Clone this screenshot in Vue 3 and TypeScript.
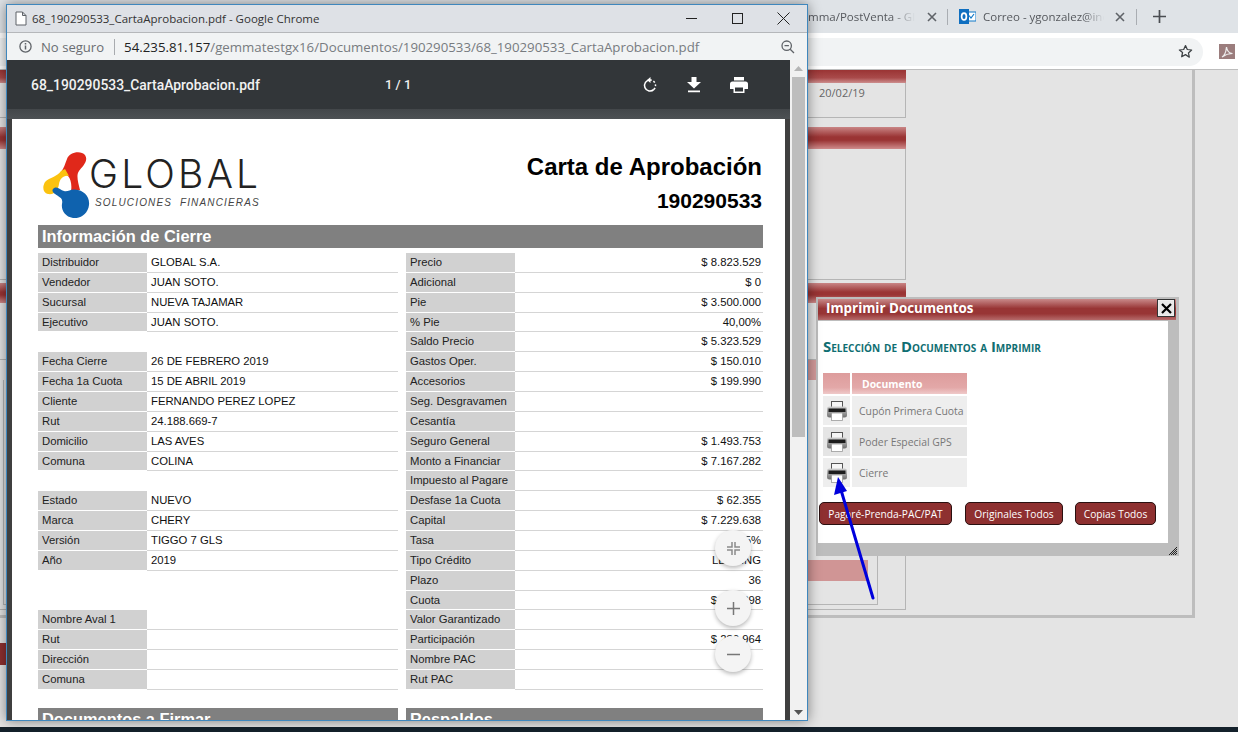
<script setup lang="ts">
type Row = [string, string] | null

const leftRows: Row[] = [
  ['Distribuidor', 'GLOBAL S.A.'],
  ['Vendedor', 'JUAN SOTO.'],
  ['Sucursal', 'NUEVA TAJAMAR'],
  ['Ejecutivo', 'JUAN SOTO.'],
  null,
  ['Fecha Cierre', '26 DE FEBRERO 2019'],
  ['Fecha 1a Cuota', '15 DE ABRIL 2019'],
  ['Cliente', 'FERNANDO PEREZ LOPEZ'],
  ['Rut', '24.188.669-7'],
  ['Domicilio', 'LAS AVES'],
  ['Comuna', 'COLINA'],
  null,
  ['Estado', 'NUEVO'],
  ['Marca', 'CHERY'],
  ['Versión', 'TIGGO 7 GLS'],
  ['Año', '2019'],
  null,
  null,
  ['Nombre Aval 1', ''],
  ['Rut', ''],
  ['Dirección', ''],
  ['Comuna', ''],
]

const rightRows: Row[] = [
  ['Precio', '$ 8.823.529'],
  ['Adicional', '$ 0'],
  ['Pie', '$ 3.500.000'],
  ['% Pie', '40,00%'],
  ['Saldo Precio', '$ 5.323.529'],
  ['Gastos Oper.', '$ 150.010'],
  ['Accesorios', '$ 199.990'],
  ['Seg. Desgravamen', ''],
  ['Cesantía', ''],
  ['Seguro General', '$ 1.493.753'],
  ['Monto a Financiar', '$ 7.167.282'],
  ['Impuesto al Pagare', ''],
  ['Desfase 1a Cuota', '$ 62.355'],
  ['Capital', '$ 7.229.638'],
  ['Tasa', '1,55%'],
  ['Tipo Crédito', 'LEASING'],
  ['Plazo', '36'],
  ['Cuota', '$ 230.398'],
  ['Valor Garantizado', ''],
  ['Participación', '$ 286.964'],
  ['Nombre PAC', ''],
  ['Rut PAC', ''],
]

const docs = ['Cupón Primera Cuota', 'Poder Especial GPS', 'Cierre']
</script>

<template>
  <div class="screen">
    <!-- browser behind -->
    <div class="tabs">
      <div class="tab tab--one">
        <span class="tab__text">mma/PostVenta - Global</span>
        <svg class="tab__x" width="10" height="10" viewBox="0 0 10 10"><path d="M1 1l8 8M9 1l-8 8" stroke="#5f6368" stroke-width="1.6" /></svg>
      </div>
      <div class="tab tab--two">
        <svg width="17" height="17" viewBox="0 0 17 17">
          <rect x="8" y="4" width="9" height="9" fill="#fff" stroke="#0f78c8" />
          <path d="M10 7.500l2 2.500 3-4" fill="none" stroke="#0f78c8" stroke-width="1.2" />
          <rect x="0" y="1" width="10" height="15" fill="#0f6fc0" />
          <ellipse cx="5" cy="8.500" rx="2.400" ry="3.400" fill="none" stroke="#fff" stroke-width="1.700" />
        </svg>
        <span class="tab__text tab__text--mail">Correo - ygonzalez@inc</span>
        <svg class="tab__x" width="10" height="10" viewBox="0 0 10 10"><path d="M1 1l8 8M9 1l-8 8" stroke="#5f6368" stroke-width="1.6" /></svg>
      </div>
      <svg class="tabs__plus" width="13" height="13" viewBox="0 0 13 13"><path d="M6.500 0v13M0 6.500h13" stroke="#4a4d52" stroke-width="1.7" /></svg>
    </div>
    <div class="toolbar">
      <div class="omnibox">
        <svg width="15" height="15" viewBox="0 0 24 24"><path d="M12 2.500l2.900 6.300 6.900.8-5.100 4.700 1.400 6.800L12 17l-6.100 3.400 1.400-6.800L2.200 9.600l6.900-.8z" fill="none" stroke="#3c4043" stroke-width="2" stroke-linejoin="round" /></svg>
      </div>
      <div class="pdf-ext">
        <svg width="14" height="14" viewBox="0 0 14 14"><path d="M2 12c2-1 4-5 4.500-10 .5 4 2 6 6 6.500-3.500 0-7 1-10.500 3.500z" fill="none" stroke="#eee" stroke-width="1.200" /></svg>
      </div>
    </div>
    <div class="page">
      <div class="outer">
        <div class="col">
          <div class="bar bar--thin" />
          <div class="cell">20/02/19</div>
          <div class="bar bar--two" />
          <div class="panel panel--a" />
          <div class="bar bar--three" />
          <div class="panel panel--b" />
          <div class="bar bar--pink" />
          <div class="panel panel--c">
            <div class="inner">
              <div class="bar-soft" />
            </div>
          </div>
        </div>
      </div>
      <div class="bar-dark" />
    </div>
    <div class="taskbar" />

    <!-- print dialog -->
    <div class="dialog">
      <div class="dialog__head">
        <span class="dialog__name">Imprimir Documentos</span>
        <div class="dialog__close">
          <svg width="11" height="11" viewBox="0 0 11 11"><path d="M1 1l9 9M10 1l-9 9" stroke="#000" stroke-width="2.200" /></svg>
        </div>
      </div>
      <div class="dialog__body">
        <h2 class="dialog__title">Selección de Documentos a Imprimir</h2>
        <div class="doc-grid">
          <div class="doc-h" />
          <div class="doc-h doc-h--name">Documento</div>
          <template v-for="(d, i) in docs" :key="d">
            <div class="doc-ic" :class="{ 'doc-alt': i === 1 }">
              <svg width="20" height="20" viewBox="0 0 20 20">
                <defs>
                  <linearGradient :id="'pg' + i" x1="0" y1="0" x2="0" y2="1">
                    <stop offset="0" stop-color="#cfcfcf" />
                    <stop offset="1" stop-color="#707070" />
                  </linearGradient>
                </defs>
                <rect x="4.500" y="0.500" width="11" height="6" fill="#f6f6f6" stroke="#555" />
                <rect x="0" y="5.500" width="20" height="11" rx="2.500" :fill="'url(#pg' + i + ')'" />
                <rect x="1.500" y="7.500" width="17" height="3.500" fill="#1c1c1c" />
                <rect x="4.500" y="12" width="11" height="7.500" fill="#fff" stroke="#999" stroke-width="0.800" />
              </svg>
            </div>
            <div class="doc-n" :class="{ 'doc-alt': i === 1 }">{{ d }}</div>
          </template>
        </div>
        <div class="dialog__btns">
          <button class="btn btn--a">Pagaré-Prenda-PAC/PAT</button>
          <button class="btn btn--b">Originales Todos</button>
          <button class="btn btn--c">Copias Todos</button>
        </div>
      </div>
      <svg class="dialog__grip" width="10" height="10" viewBox="0 0 10 10">
        <path d="M9 1L1 9M9 3L3 9M9 5L5 9M9 7L7 9" stroke="#222" stroke-width="1" />
      </svg>
    </div>

    <!-- hand drawn arrow -->
    <svg class="arrow" width="60" height="140" viewBox="0 0 60 140">
      <path d="M38 124L6 16" stroke="#0000dc" stroke-width="3" stroke-linecap="round" />
      <path d="M3 3L12 17L-1 21Z" fill="#0000dc" />
    </svg>

    <!-- pdf popup -->
    <div class="win">
      <div class="win__title">
        <svg width="12" height="15" viewBox="0 0 12 15"><path d="M1 1h6.500L11 4.500V14H1zM7.500 1v3.500H11" fill="#fff" stroke="#5f6368" /></svg>
        <span class="win__name">68_190290533_CartaAprobacion.pdf - Google Chrome</span>
        <svg class="win__btn" width="11" height="11" viewBox="0 0 11 11"><path d="M0 5.500h11" stroke="#222" /></svg>
        <svg class="win__btn" width="11" height="11" viewBox="0 0 11 11"><rect x="0.500" y="0.500" width="10" height="10" fill="none" stroke="#222" /></svg>
        <svg class="win__btn win__btn--x" width="13" height="13" viewBox="0 0 13 13"><path d="M0.500 0.500l12 12M12.500 0.500l-12 12" stroke="#222" /></svg>
      </div>
      <div class="win__addr">
        <svg width="13" height="13" viewBox="0 0 13 13">
          <circle cx="6.500" cy="6.500" r="5.600" fill="none" stroke="#5f6368" stroke-width="1.300" />
          <path d="M6.500 5.600v4M6.500 3v1.400" stroke="#5f6368" stroke-width="1.500" />
        </svg>
        <span class="win__sec">No seguro</span>
        <span class="win__sep" />
        <span class="win__url"><b>54.235.81.157</b>/gemmatestgx16/Documentos/190290533/68_190290533_CartaAprobacion.pdf</span>
        <svg class="win__zoom" width="14" height="14" viewBox="0 0 14 14">
          <circle cx="5.700" cy="5.700" r="4.700" fill="none" stroke="#5f6368" stroke-width="1.300" />
          <path d="M3.500 5.700h4.400M9.200 9.200L13 13" stroke="#5f6368" stroke-width="1.300" />
        </svg>
      </div>
      <div class="viewer">
        <div class="viewer__main">
          <div class="pdfbar">
            <span class="pdfbar__name">68_190290533_CartaAprobacion.pdf</span>
            <span class="pdfbar__count">1 / 1</span>
            <div class="pdfbar__icons">
              <svg width="16" height="17" viewBox="0 0 16 17">
                <path d="M8.500 1L5 4l3.500 3z" fill="#fff" />
                <path d="M8 4a5.500 5.500 0 1 0 3.900 9.400" fill="none" stroke="#fff" stroke-width="1.500" />
                <path d="M8 4a5.500 5.500 0 0 1 5.500 5.500 5.500 5.500 0 0 1-1.600 3.900" fill="none" stroke="#fff" stroke-width="1.500" stroke-dasharray="1.800 1.800" />
              </svg>
              <svg width="14" height="16" viewBox="0 0 14 16"><path d="M4.500 0h5v5.500H14L7 12 0 5.500h4.500zM1 14h12v1.700H1z" fill="#fff" transform="translate(0 -.5)" /></svg>
              <svg width="18" height="16" viewBox="0 0 18 16"><path d="M4 0h10v3.500H4zM2.500 4.500h13A2.500 2.500 0 0 1 18 7v5h-3.500v4h-11v-4H0V7a2.500 2.500 0 0 1 2.500-2.500zM5 10.500v4h8v-4z" fill="#fff" fill-rule="evenodd" /></svg>
            </div>
          </div>
          <div class="pdfshade" />
          <div class="sheet">
            <div class="sheet__head">
              <div class="logo">
                <svg class="logo__mark" width="48" height="66" viewBox="43 152 48 66">
                  <path d="M67 159C69 152 81 150 85 155C89 161 82 167 79 171C76 175 78 182 80 190L71 191C72 186 71 179 68 176L61 172C64 168 65 164 67 159Z" fill="#e0281a" />
                  <path d="M65 169L69 176C63 175 60 179 59 184C58 191 54 195 48 194C43 193 42 187 45 182C50 177 57 177 61 171Z" fill="#fbc20f" />
                  <path d="M53 189C57 185 60 190 64 191C68 192 70 189 75 189.500C84 190 90 197 89 205C88 214 80 219 73 218C65 217 61 210 62 204C63 199 61 198 58 196C55 194 51 192 53 189Z" fill="#0f62ae" />
                </svg>
                <div class="logo__text">
                  <span class="logo__name">GLOBAL</span>
                  <span class="logo__sub">SOLUCIONES&nbsp; FINANCIERAS</span>
                </div>
              </div>
              <div class="sheet__titles">
                <div class="sheet__h1">Carta de Aprobación</div>
                <div class="sheet__h2">190290533</div>
              </div>
            </div>
            <div class="section">Información de Cierre</div>
            <div class="cols">
              <div class="rows">
                <template v-for="(r, i) in leftRows" :key="i">
                  <div v-if="r" class="row">
                    <span class="row__k">{{ r[0] }}</span>
                    <span class="row__v">{{ r[1] }}</span>
                  </div>
                  <div v-else class="row row--blank" />
                </template>
              </div>
              <div class="rows">
                <template v-for="(r, i) in rightRows" :key="i">
                  <div v-if="r" class="row">
                    <span class="row__k">{{ r[0] }}</span>
                    <span class="row__v row__v--num">{{ r[1] }}</span>
                  </div>
                </template>
              </div>
            </div>
            <div class="cols cols--next">
              <div class="section">Documentos a Firmar</div>
              <div class="section">Respaldos</div>
            </div>
          </div>
          <div class="fab fab--fit">
            <svg width="13" height="13" viewBox="0 0 13 13"><path d="M5 0v5H0M8 0v5h5M5 13V8H0M8 13V8h5" fill="none" stroke="#8a8a8a" stroke-width="1.500" /></svg>
          </div>
          <div class="fab fab--plus">
            <svg width="13" height="13" viewBox="0 0 13 13"><path d="M6.500 0v13M0 6.500h13" stroke="#777" stroke-width="1.500" /></svg>
          </div>
          <div class="fab fab--minus">
            <svg width="13" height="13" viewBox="0 0 13 13"><path d="M0 6.500h13" stroke="#777" stroke-width="1.500" /></svg>
          </div>
        </div>
        <div class="scroll">
          <svg width="9" height="5" viewBox="0 0 9 5"><path d="M4.500 0L9 5H0z" fill="#b5b5b5" /></svg>
          <div class="scroll__thumb" />
          <svg class="scroll__down" width="9" height="5" viewBox="0 0 9 5"><path d="M4.500 5L9 0H0z" fill="#555" /></svg>
        </div>
      </div>
    </div>
  </div>
</template>

<style>
html, body {
  margin: 0;
  background: #e4e4e4;
}
</style>

<style scoped>
.screen {
  position: relative;
  width: 1238px;
  height: 732px;
  overflow: hidden;
  display: flex;
  flex-direction: column;
  background: #e4e4e4;
  font-family: "Open Sans", sans-serif;
}

/* back browser */
.tabs {
  height: 33px;
  flex-shrink: 0;
  background: #dfe3e7;
  display: flex;
  align-items: center;
  padding-left: 808px;
  box-sizing: border-box;
  color: #55585d;
  font-size: 11.5px;
}
.tab {
  display: flex;
  align-items: center;
  height: 16px;
  border-right: 1px solid #a9adb2;
  box-sizing: border-box;
}
.tab--one { width: 140px; }
.tab--two { width: 189px; padding-left: 11px; }
.tab__text {
  width: 119px;
  overflow: hidden;
  white-space: nowrap;
  -webkit-mask-image: linear-gradient(90deg, #000 70%, #0000 90%);
  mask-image: linear-gradient(90deg, #000 70%, #0000 90%);
}
.tab__text--mail {
  width: 125px;
  margin-left: 7px;
  -webkit-mask-image: linear-gradient(90deg, #000 80%, #0000 97%);
  mask-image: linear-gradient(90deg, #000 80%, #0000 97%);
}
.tab--two .tab__x { margin-left: 7px; }
.tabs__plus { margin-left: 16px; }

.toolbar {
  height: 37px;
  flex-shrink: 0;
  box-sizing: border-box;
  background: #fff;
  border-bottom: 1px solid #bdbdbd;
  display: flex;
  align-items: center;
  padding-top: 1px;
}
.omnibox {
  width: 1203px;
  height: 28px;
  box-sizing: border-box;
  background: #f1f3f4;
  border-radius: 0 14px 14px 0;
  display: flex;
  align-items: center;
  justify-content: flex-end;
  padding-right: 10px;
}
.pdf-ext {
  width: 16px;
  height: 15px;
  margin-left: 16px;
  background: #9b7d7d;
  display: flex;
  align-items: center;
  justify-content: center;
}

.page {
  flex: 1;
  min-height: 0;
  background: #e4e4e4;
}
.outer {
  width: 1195px;
  height: 548px;
  box-sizing: border-box;
  border-right: 3px solid #bdbdbd;
  border-bottom: 3px solid #bdbdbd;
}
.col {
  width: 906px;
  display: flex;
  flex-direction: column;
}
.bar {
  background: linear-gradient(#c98585, #9a3434 45%, #9a3434 60%, #cf8c8c);
  flex-shrink: 0;
}
.bar--thin {
  height: 13px;
  background: linear-gradient(#9a3434, #a94a4a 60%, #cd8e8e);
}
.cell {
  height: 35px;
  box-sizing: border-box;
  padding: 1px 0 0 819px;
  border-right: 1px solid #b5b5b5;
  border-bottom: 1px solid #b5b5b5;
  color: #666;
  font-size: 11px;
  line-height: 17px;
  margin-bottom: 9px;
}
.bar--two { height: 22px; }
.panel {
  border-right: 1px solid #b5b5b5;
  border-bottom: 1px solid #b5b5b5;
  box-sizing: border-box;
}
.panel--a { height: 131px; margin-bottom: 3px; }
.bar--three { height: 20px; }
.panel--b { height: 57px; }
.bar--pink {
  height: 20px;
  margin-left: 700px;
  background: #d39a9a;
}
.panel--c { height: 230px; }
.inner {
  margin-left: 3px;
  width: 875px;
  height: 225px;
  box-sizing: border-box;
  border: 1px solid #b5b5b5;
  border-top: none;
  padding: 180px 0 0 700px;
}
.bar-soft {
  width: 164px;
  height: 21px;
  background: #d09595;
}
.bar-dark {
  margin-top: 25px;
  width: 100px;
  height: 22px;
  background: #8e3030;
}
.taskbar {
  height: 5px;
  flex-shrink: 0;
  background: #14212b;
}

/* dialog */
.dialog {
  position: absolute;
  left: 816px;
  top: 297px;
  width: 363px;
  height: 259px;
  box-sizing: border-box;
  padding: 2px 3px 0 2px;
  background: #bdbdbd;
}
.dialog__head {
  height: 21px;
  display: flex;
  align-items: center;
  justify-content: space-between;
  padding-left: 8px;
  color: #fff;
  font-size: 13.4px;
  font-weight: 700;
  background: linear-gradient(#c98a8a, #983535 45%, #983535 70%, #b56a6a);
}
.dialog__name {
  line-height: 18px;
  margin-top: -4px;
}
.dialog__close {
  width: 16px;
  height: 16px;
  margin: -3px 1px 0 0;
  border: 1px solid #333;
  outline: 1px solid #eee;
  outline-offset: -2px;
  background: #e8e8e8;
  display: flex;
  align-items: center;
  justify-content: center;
}
.dialog__body {
  width: 350px;
  height: 222px;
  margin-top: 1px;
  box-sizing: border-box;
  background: #fff;
  padding: 17px 1px 0 5px;
}
.dialog__title {
  margin: 0;
  font-size: 14.9px;
  font-weight: 700;
  font-variant: small-caps;
  line-height: 16px;
  color: #0f6e72;
  white-space: nowrap;
}
.doc-grid {
  margin-top: 19px;
  display: grid;
  grid-template-columns: 27px 115px;
  grid-template-rows: 21px 29px 29px 29px;
  gap: 2px;
  width: 144px;
  font-size: 10.4px;
}
.doc-h {
  background: linear-gradient(#dd9c9c, #e3a8a8 70%, #efc9c9);
}
.doc-h--name {
  color: #fff;
  font-weight: 700;
  padding-left: 10px;
  line-height: 22px;
}
.doc-ic,
.doc-n {
  background: #eeeeee;
  display: flex;
  align-items: center;
}
.doc-ic { justify-content: center; }
.doc-n {
  padding-left: 7px;
  color: #777;
  white-space: nowrap;
}
.doc-alt { background: #e5e5e5; }
.dialog__btns {
  display: flex;
  margin: 15px 0 0 -4px;
}
.btn {
  height: 23px;
  box-sizing: border-box;
  padding: 0;
  border: 1px solid #2a1010;
  border-radius: 5px;
  background: #8e3030;
  color: #fff;
  font-family: inherit;
  font-size: 10.2px;
  white-space: nowrap;
}
.btn--a { width: 133px; margin-right: 13px; }
.btn--b { width: 98px; margin-right: 12px; }
.btn--c { width: 81px; }
.dialog__grip {
  position: absolute;
  right: 1px;
  bottom: 0;
}

.arrow {
  position: absolute;
  left: 835px;
  top: 474px;
  overflow: visible;
}

/* pdf popup */
.win {
  position: absolute;
  left: 6px;
  top: 4px;
  width: 802px;
  height: 717px;
  box-sizing: border-box;
  border: 1px solid #3f87bd;
  display: flex;
  flex-direction: column;
  box-shadow: 0 0 12px rgba(0, 0, 0, 0.45);
  background: #f1f3f4;
}
.win__title {
  height: 28px;
  flex-shrink: 0;
  box-sizing: border-box;
  background: #dee1e6;
  border-bottom: 1px solid #b5b7ba;
  display: flex;
  align-items: center;
  padding-left: 8px;
}
.win__name {
  margin-left: 5px;
  width: 654px;
  font-size: 11.5px;
  color: #333;
}
.win__btn { margin-right: 35px; }
.win__btn--x { margin: 0 0 0 -1px; }
.win__addr {
  height: 27px;
  flex-shrink: 0;
  box-sizing: border-box;
  display: flex;
  align-items: center;
  padding-left: 12px;
  background: #f1f3f4;
}
.win__sec {
  margin-left: 9px;
  font-size: 13.1px;
  color: #6a6d72;
}
.win__sep {
  width: 1px;
  height: 16px;
  margin: 0 9px 0 10px;
  background: #a8abaf;
}
.win__url {
  width: 652px;
  font-size: 13.25px;
  color: #777b80;
  white-space: nowrap;
  overflow: hidden;
}
.win__url b {
  font-weight: 400;
  color: #222;
}
.win__zoom { margin-left: 5px; }

.viewer {
  flex: 1;
  min-height: 0;
  display: flex;
}
.viewer__main {
  position: relative;
  flex: 1;
  min-width: 0;
  background: #3f3f3f;
  overflow: hidden;
}
.scroll {
  width: 17px;
  flex-shrink: 0;
  box-sizing: border-box;
  background: #f1f1f1;
  display: flex;
  flex-direction: column;
  align-items: center;
  padding-top: 6px;
}
.scroll__thumb {
  width: 13px;
  height: 360px;
  margin-top: 6px;
  background: #bdbdbd;
}
.scroll__down { margin-top: auto; margin-bottom: 5px; }
.pdfbar {
  height: 49px;
  background: #323639;
  display: flex;
  align-items: center;
  color: #f1f1f1;
  font-family: Roboto, "Open Sans", sans-serif;
  font-weight: 500;
  font-size: 13.9px;
  padding-left: 24px;
}
.pdfbar__name { width: 354px; }
.pdfbar__count { width: 257px; font-size: 13px; }
.pdfbar__icons {
  display: flex;
  align-items: center;
  gap: 29px;
}
.pdfshade {
  height: 10px;
  background: linear-gradient(#43474a, #4d5154);
}
.sheet {
  margin: 0 5px;
  background: #fff;
  padding: 0 22px 0 26px;
  color: #000;
  font-family: "Liberation Sans", Arial, sans-serif;
  height: 640px;
}
.sheet__head {
  height: 106px;
  display: flex;
  justify-content: space-between;
}
.logo {
  display: flex;
  padding: 33px 0 0 5px;
  height: 66px;
}
.logo__mark { flex-shrink: 0; }
.logo__text {
  margin-left: -2px;
  display: flex;
  flex-direction: column;
  padding-top: 4px;
}
.logo__name {
  font-family: Inter, "Open Sans", sans-serif;
  font-weight: 300;
  font-size: 39px;
  line-height: 36px;
  letter-spacing: 3.2px;
  color: #222;
}
.logo__sub {
  margin: 5px 0 0 6px;
  font-size: 10px;
  line-height: 12px;
  font-style: italic;
  letter-spacing: 1.15px;
  color: #444;
  white-space: nowrap;
}
.sheet__titles {
  text-align: right;
  font-weight: 700;
  padding: 34px 1px 0 0;
}
.sheet__h1 { font-size: 24px; line-height: 28px; }
.sheet__h2 { font-size: 21px; line-height: 26px; margin-top: 7px; }
.section {
  height: 23px;
  background: #808080;
  color: #fff;
  font-size: 16.4px;
  font-weight: 700;
  line-height: 23px;
  padding-left: 4px;
}
.cols {
  display: grid;
  grid-template-columns: 360px 357px;
  column-gap: 8px;
  margin-top: 4px;
  padding-top: 1px;
}
.cols--next { margin-top: 17px; }
.rows {
  display: grid;
  grid-auto-rows: 19.87px;
  font-size: 11.3px;
}
.row {
  display: flex;
  min-width: 0;
}
.row__k {
  flex: 0 0 109px;
  box-sizing: border-box;
  padding-left: 4px;
  background: #d1d1d1;
  border-bottom: 1px solid #fff;
  line-height: 19px;
  color: #222;
  white-space: nowrap;
  overflow: hidden;
}
.row__v {
  flex: 1;
  box-sizing: border-box;
  padding-left: 4px;
  border-bottom: 1px solid #d5d5d5;
  line-height: 19px;
  color: #111;
}
.row__v--num {
  text-align: right;
  padding: 0 2px 0 0;
}
.fab {
  position: absolute;
  left: 708px;
  width: 36px;
  height: 36px;
  border-radius: 50%;
  background: #f4f4f4;
  box-shadow: 0 2px 4px rgba(0, 0, 0, 0.28);
  display: flex;
  align-items: center;
  justify-content: center;
}
.fab--fit { top: 470px; }
.fab--plus { top: 530px; }
.fab--minus { top: 576px; }
</style>
